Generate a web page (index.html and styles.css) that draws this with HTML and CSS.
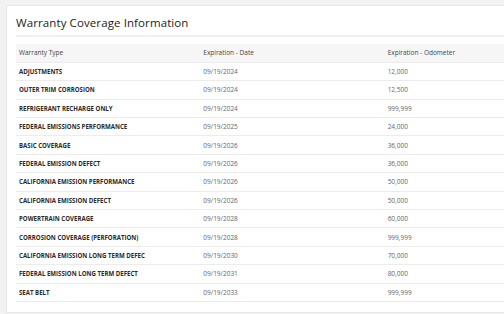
FILE: index.html
```html
<!DOCTYPE html>
<html lang="en">
<head>
    <meta charset="UTF-8">
    <title>Warranty Coverage Information</title>
    <link rel="stylesheet" href="styles.css">
</head>
<body>

<div class="card">
    <h2 class="titulo">Warranty Coverage Information</h2>

    <table class="garantia">
        <thead>
            <tr>
                <th>Warranty Type</th>
                <th>Expiration - Date</th>
                <th>Expiration - Odometer</th>
            </tr>
        </thead>
        <tbody>
            <tr><td>ADJUSTMENTS</td><td>09/19/2024</td><td>12,000</td></tr>
            <tr><td>OUTER TRIM CORROSION</td><td>09/19/2024</td><td>12,500</td></tr>
            <tr><td>REFRIGERANT RECHARGE ONLY</td><td>09/19/2024</td><td>999,999</td></tr>
            <tr><td>FEDERAL EMISSIONS PERFORMANCE</td><td>09/19/2025</td><td>24,000</td></tr>
            <tr><td>BASIC COVERAGE</td><td>09/19/2026</td><td>36,000</td></tr>
            <tr><td>FEDERAL EMISSION DEFECT</td><td>09/19/2026</td><td>36,000</td></tr>
            <tr><td>CALIFORNIA EMISSION PERFORMANCE</td><td>09/19/2026</td><td>50,000</td></tr>
            <tr><td>CALIFORNIA EMISSION DEFECT</td><td>09/19/2026</td><td>50,000</td></tr>
            <tr><td>POWERTRAIN COVERAGE</td><td>09/19/2028</td><td>60,000</td></tr>
            <tr><td>CORROSION COVERAGE (PERFORATION)</td><td>09/19/2028</td><td>999,999</td></tr>
            <tr><td>CALIFORNIA EMISSION LONG TERM DEFEC</td><td>09/19/2030</td><td>70,000</td></tr>
            <tr><td>FEDERAL EMISSION LONG TERM DEFECT</td><td>09/19/2031</td><td>80,000</td></tr>
            <tr><td>SEAT BELT</td><td>09/19/2033</td><td>999,999</td></tr>
        </tbody>
    </table>
</div>

</body>
</html>
```

FILE: styles.css
```css
* {
    margin: 0;
    padding: 0;
    box-sizing: border-box;
    font-family: 'Open Sans', sans-serif;
}

html, body {
    overflow: hidden;
}

body {
    background: #f2f2f2;
    padding: 5px 0 0 6px;
    width: 640px;
}

.card {
    background: #fff;
    border: 1px solid #e6e6e6;
    width: 600px;
    padding: 0 0 10px 9px;
}

.titulo {
    font-weight: 400;
    font-size: 11.5px;
    color: #222;
    height: 31px;
    line-height: 33px;
    border-bottom: 2px solid #f0f0f0;
    margin-bottom: 7px;
    letter-spacing: 0.1px;
}

.garantia {
    width: 553px;
    border-collapse: collapse;
    table-layout: fixed;
}

.garantia th,
.garantia td {
    text-align: left;
    padding: 0 3px;
    height: 18.4px;
    font-size: 6.5px;
    border-bottom: 1px solid #ececec;
}

.garantia th {
    background: #f6f6f6;
    font-weight: 400;
    color: #444;
}

.garantia td {
    color: #666;
}

.garantia td:first-child {
    font-weight: 700;
    font-size: 6.1px;
    color: #2a2a2a;
}
```
